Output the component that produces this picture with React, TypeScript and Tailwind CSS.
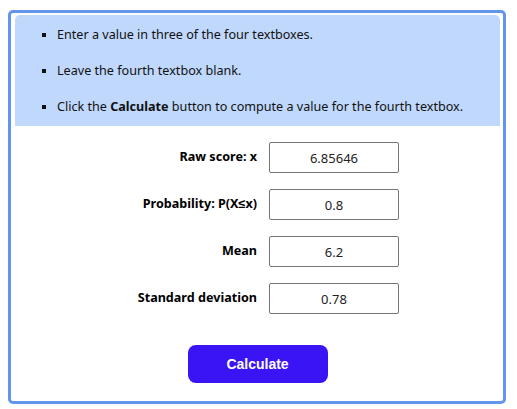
import { useState } from "react";

const rows = [
  { id: "x", label: "Raw score: x", value: "6.85646" },
  { id: "p", label: "Probability: P(X≤x)", value: "0.8" },
  { id: "mean", label: "Mean", value: "6.2" },
  { id: "sd", label: "Standard deviation", value: "0.78" },
];

export default function App() {
  const [values, setValues] = useState<Record<string, string>>(
    Object.fromEntries(rows.map((r) => [r.id, r.value]))
  );

  return (
    <div className="w-[517px] h-[409px] bg-white pt-[10px] pl-[8px]" style={{ fontFamily: '"Noto Sans", sans-serif' }}>
      <div className="w-[498px] h-[394px] border-[3px] border-[#6495ed] rounded-[5px] pt-[2px] pl-[4px] pr-[3px] flex flex-col">
        {/* Instructions */}
        <div className="bg-[#c0d8fc] rounded-t-[5px] h-[111px] pt-[10px]">
          <ul className="list-[square] pl-[42px] text-[12.6px] text-[#111] flex flex-col gap-[17px] leading-[19px]">
            <li>Enter a value in three of the four textboxes.</li>
            <li>Leave the fourth textbox blank.</li>
            <li>
              Click the <b>Calculate</b> button to compute a value for the fourth textbox.
            </li>
          </ul>
        </div>

        {/* Form */}
        <div className="flex flex-col gap-[16px] mt-[16px]">
          {rows.map((r) => (
            <div key={r.id} className="flex items-center">
              <label htmlFor={r.id} className="w-[242px] shrink-0 text-right text-[12.6px] font-bold text-black">
                {r.label}
              </label>
              <div className="pl-[12px]">
                <input
                  id={r.id}
                  value={values[r.id]}
                  onChange={(e) => setValues({ ...values, [r.id]: e.target.value })}
                  className="w-[130px] h-[31px] border border-[#767676] rounded-[2px] text-center text-[13px] text-[#222] outline-none"
                />
              </div>
            </div>
          ))}
        </div>

        <div className="flex justify-center mt-[31px]">
          <button
            className="w-[140px] h-[38px] rounded-[8px] bg-[#3a14f5] text-white font-bold text-[14px]"
            style={{ fontFamily: '"Liberation Sans", Arial, sans-serif' }}
          >
            Calculate
          </button>
        </div>
      </div>
    </div>
  );
}
